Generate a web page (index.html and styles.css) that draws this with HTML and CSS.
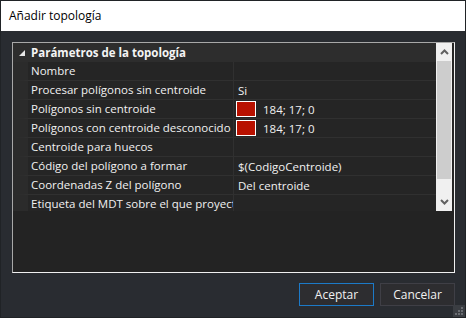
FILE: index.html
```html
<!DOCTYPE html>
<html lang="es">
<head>
    <meta charset="UTF-8">
    <title>Añadir topología</title>
    <link rel="stylesheet" href="styles.css">
</head>
<body>
    <div class="window">
        <div class="titlebar">Añadir topología</div>
        <div class="content">
            <div class="panel">
                <div class="grid-area">
                    <div class="grid">
                        <div class="rows">
                            <div class="category">
                                <svg class="expander" width="6" height="6" viewBox="0 0 6 6"><polygon points="6,0 6,6 0,6" fill="#e6e6e6"/></svg>
                                <span>Parámetros de la topología</span>
                            </div>
                            <div class="row"><div class="name">Nombre</div><div class="value"></div></div>
                            <div class="row"><div class="name">Procesar polígonos sin centroide</div><div class="value">Si</div></div>
                            <div class="row"><div class="name">Polígonos sin centroide</div><div class="value"><span class="swatch"></span>184; 17; 0</div></div>
                            <div class="row"><div class="name">Polígonos con centroide desconocido</div><div class="value"><span class="swatch"></span>184; 17; 0</div></div>
                            <div class="row"><div class="name">Centroide para huecos</div><div class="value"></div></div>
                            <div class="row"><div class="name">Código del polígono a formar</div><div class="value">$(CodigoCentroide)</div></div>
                            <div class="row"><div class="name">Coordenadas Z del polígono</div><div class="value">Del centroide</div></div>
                            <div class="row"><div class="name">Etiqueta del MDT sobre el que proyectar</div><div class="value"></div></div>
                        </div>
                        <div class="scrollbar">
                            <div class="arrow">
                                <svg width="9" height="6" viewBox="0 0 9 6"><polyline points="1,5 4.5,1.5 8,5" fill="none" stroke="#606060" stroke-width="2"/></svg>
                            </div>
                            <div class="thumb"></div>
                            <div class="track"></div>
                            <div class="arrow">
                                <svg width="9" height="6" viewBox="0 0 9 6"><polyline points="1,1 4.5,4.5 8,1" fill="none" stroke="#606060" stroke-width="2"/></svg>
                            </div>
                        </div>
                    </div>
                    <div class="help"></div>
                </div>
            </div>
            <div class="buttons">
                <button class="btn btn-default">Aceptar</button>
                <button class="btn">Cancelar</button>
            </div>
        </div>
        <svg class="grip" width="10" height="10" viewBox="0 0 10 10">
            <rect x="7" y="1" width="2" height="2" fill="#6a6d72"/>
            <rect x="4" y="4" width="2" height="2" fill="#6a6d72"/>
            <rect x="7" y="4" width="2" height="2" fill="#6a6d72"/>
            <rect x="1" y="7" width="2" height="2" fill="#6a6d72"/>
            <rect x="4" y="7" width="2" height="2" fill="#6a6d72"/>
            <rect x="7" y="7" width="2" height="2" fill="#6a6d72"/>
        </svg>
    </div>
</body>
</html>
```

FILE: styles.css
```css
body {
    margin: 0;
    background: #2a2d32;
    font-family: 'Segoe UI', 'Open Sans', sans-serif;
    font-size: 12px;
}

.window {
    width: 466px;
    height: 318px;
    box-sizing: border-box;
    border: 1px solid #202326;
    background: #292c31;
    display: flex;
    flex-direction: column;
    position: relative;
    overflow: hidden;
}

.titlebar {
    height: 30px;
    line-height: 30px;
    background: #ffffff;
    color: #000000;
    padding-left: 8px;
}

.content {
    padding: 11px 0 0 11px;
}

.panel {
    width: 443px;
    height: 231px;
    box-sizing: border-box;
    border: 1px solid #f0f0f0;
    border-top-color: #a8a8a8;
    border-left-color: #a8a8a8;
    background: #232323;
}

.grid-area {
    display: flex;
    flex-direction: column;
    height: 100%;
}

.grid {
    display: flex;
    height: 168px;
    background: #252525;
    font-size: 11.5px;
}

.rows {
    width: 423px;
    overflow: hidden;
}

.category {
    height: 19px;
    display: flex;
    align-items: center;
    background: #2d2d2d;
    color: #f4f4f4;
    font-weight: bold;
}

.expander {
    margin: 0 6px 0 6px;
}

.row {
    display: flex;
    height: 19px;
    box-sizing: border-box;
    border-left: 15px solid #2b2b2b;
    border-bottom: 1px solid #303030;
    color: #f1f1f1;
}

.name {
    width: 202px;
    padding-left: 3px;
    border-right: 1px solid #303030;
    white-space: nowrap;
    overflow: hidden;
    line-height: 18px;
}

.value {
    flex: 1;
    padding-left: 4px;
    display: flex;
    align-items: center;
    white-space: nowrap;
}

.swatch {
    width: 18px;
    height: 14px;
    border: 1px solid #ffffff;
    background: #b81100;
    margin: 0 7px 0 -2px;
}

.scrollbar {
    width: 16px;
    background: #f0f0f0;
    display: flex;
    flex-direction: column;
}

.arrow {
    height: 18px;
    display: flex;
    align-items: center;
    justify-content: center;
}

.thumb {
    height: 118px;
    margin: 0 1px;
    background: #cdcdcd;
}

.track {
    flex: 1;
}

.help {
    flex: 1;
}

.buttons {
    display: flex;
    justify-content: flex-end;
    gap: 6px;
    width: 443px;
    margin-top: 10px;
}

.btn {
    width: 75px;
    height: 23px;
    background: #2d2d30;
    color: #f1f1f1;
    border: 1px solid #3f3f46;
    font-family: 'Segoe UI', 'Open Sans', sans-serif;
    font-size: 12px;
    padding: 0;
}

.btn-default {
    border-color: #1c7ac8;
}

.grip {
    position: absolute;
    right: 0;
    bottom: 0;
    background: #3a3d42;
    padding: 1px;
}
```
